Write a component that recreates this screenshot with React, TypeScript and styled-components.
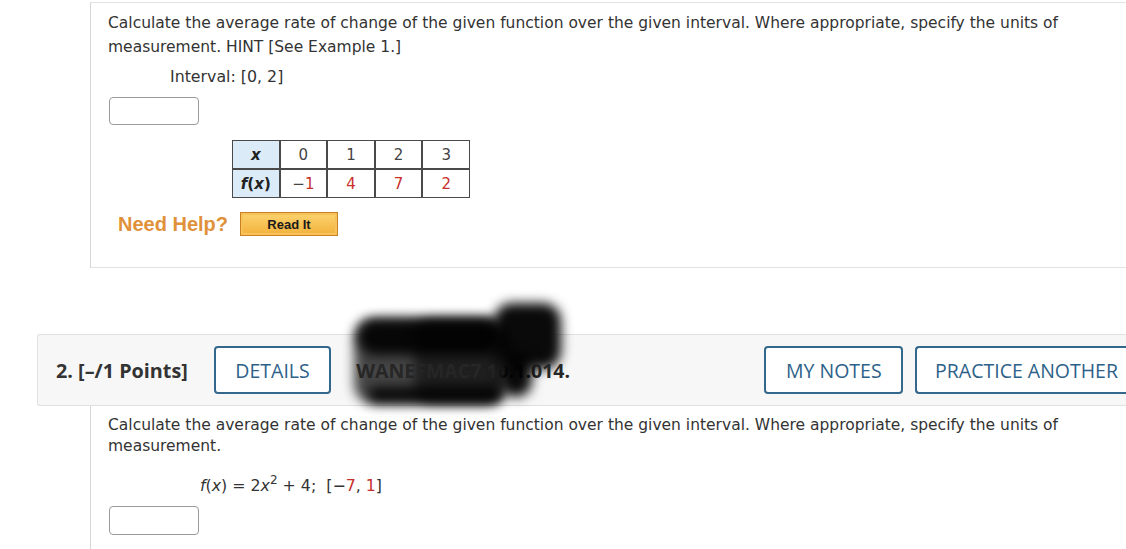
import React from 'react';
import styled, { createGlobalStyle } from 'styled-components';

const GlobalStyle = createGlobalStyle`
  body {
    margin: 0;
    background: #fff;
  }
`;

const App: React.FC = () => (
  <>
    <GlobalStyle />
    <Page>
      <QuestionBody $top>
        <Prompt>
          Calculate the average rate of change of the given function over the given interval. Where appropriate, specify the units of
          measurement. HINT [See Example 1.]
        </Prompt>
        <Formula $indent={62}>Interval: [0, 2]</Formula>
        <AnswerBox />
        <ValueTable>
          <tbody>
            <tr>
              <HeadCell>
                <i>x</i>
              </HeadCell>
              <Cell>0</Cell>
              <Cell>1</Cell>
              <Cell>2</Cell>
              <Cell>3</Cell>
            </tr>
            <tr>
              <HeadCell>
                <i>f</i>(<i>x</i>)
              </HeadCell>
              <Cell>
                −<Red>1</Red>
              </Cell>
              <Cell>
                <Red>4</Red>
              </Cell>
              <Cell>
                <Red>7</Red>
              </Cell>
              <Cell>
                <Red>2</Red>
              </Cell>
            </tr>
          </tbody>
        </ValueTable>
        <HelpRow>
          <HelpLabel>Need Help?</HelpLabel>
          <ReadIt>Read It</ReadIt>
        </HelpRow>
      </QuestionBody>

      <QuestionHeader>
        <Points>2. [–/1 Points]</Points>
        <OutlineButton>DETAILS</OutlineButton>
        <Code>
          {/* redaction smear drawn over the assignment code */}
          <Redaction $front={false}>
            <Smudge $left={0} $top={14} $width={152} $height={84} $alpha={0.72} />
            <Smudge $left={4} $top={14} $width={143} $height={36} $alpha={0.9} />
            <Smudge $left={14} $top={82} $width={134} $height={16} $alpha={0.9} />
            <Smudge $left={60} $top={14} $width={90} $height={84} $alpha={0.55} />
            <Smudge $left={140} $top={-2} $width={67} $height={66} $alpha={0.96} />
          </Redaction>
          <CodeText>WANEFMAC7 10.1.014.</CodeText>
          <Redaction $front>
            <Smudge $left={146} $top={48} $width={32} $height={44} $alpha={0.96} />
          </Redaction>
        </Code>
        <Spacer />
        <OutlineButton>MY NOTES</OutlineButton>
        <OutlineButton $open>PRACTICE ANOTHER</OutlineButton>
      </QuestionHeader>

      <QuestionBody>
        <Prompt $tight>
          Calculate the average rate of change of the given function over the given interval. Where appropriate, specify the units of
          measurement.
        </Prompt>
        <Formula $indent={92} $gap={18}>
          <i>f</i>(<i>x</i>) = 2<i>x</i>
          <sup>2</sup> + 4;&nbsp; [−<Red>7</Red>, <Red>1</Red>]
        </Formula>
        <AnswerBox $tall />
      </QuestionBody>
    </Page>
  </>
);

const Page = styled.div`
  width: 1126px;
  height: 549px;
  overflow: hidden;
  display: flex;
  flex-direction: column;
  font-family: 'DejaVu Sans', Verdana, sans-serif;
  color: #333;

  > * {
    flex-shrink: 0;
  }
`;

const QuestionBody = styled.section<{ $top?: boolean }>`
  margin-left: 90px;
  padding: ${(p) => (p.$top ? '8px 0 31px 17px' : '9px 0 20px 17px')};
  border-left: 1px solid #d6d6d6;
  ${(p) =>
    p.$top &&
    `
    margin-top: 2px;
    border-top: 1px solid #e2e2e2;
    border-bottom: 1px solid #e2e2e2;
  `}
`;

const Prompt = styled.p<{ $tight?: boolean }>`
  margin: 0;
  font-size: 15.5px;
  line-height: ${(p) => (p.$tight ? '21px' : '24px')};
  max-width: 1000px;
`;

const Formula = styled.div<{ $indent: number; $gap?: number }>`
  margin: ${(p) => p.$gap ?? 7}px 0 0 ${(p) => p.$indent}px;
  font-size: 15.8px;
  line-height: 22px;

  sup {
    font-size: 12px;
    line-height: 0;
    vertical-align: 7px;
  }
`;

const AnswerBox = styled.div<{ $tall?: boolean }>`
  width: 88px;
  height: ${(p) => (p.$tall ? 27 : 26)}px;
  margin: 9px 0 0 1px;
  border: 1px solid #9a9a9a;
  border-radius: 4px;
  background: #fff;
`;

const ValueTable = styled.table`
  margin: 15px 0 0 124px;
  border-collapse: separate;
  border-spacing: 0;
  font-size: 15px;
`;

const Cell = styled.td`
  width: 45.6px;
  height: 27px;
  padding: 0;
  border: 1px solid #4a4a4a;
  text-align: center;
  color: #444;
`;

const HeadCell = styled(Cell)`
  background: #dcebf8;
  font-weight: bold;
  color: #222;
`;

const Red = styled.span`
  color: #c8302c;
`;

const HelpRow = styled.div`
  display: flex;
  align-items: center;
  gap: 12px;
  margin: 14px 0 0 10px;
`;

const HelpLabel = styled.span`
  font-family: 'Liberation Sans', Arial, sans-serif;
  font-weight: bold;
  font-size: 20px;
  color: #e0913a;
`;

const ReadIt = styled.button`
  width: 98px;
  height: 24px;
  padding: 0;
  border: 1px solid #c9801f;
  box-shadow: inset 0 0 0 2px #f7c25c;
  background: linear-gradient(#fbd36f, #f3b23c);
  font-family: 'Liberation Sans', Arial, sans-serif;
  font-weight: bold;
  font-size: 13px;
  color: #1a1a1a;
`;

const QuestionHeader = styled.header`
  display: flex;
  align-items: center;
  gap: 26px;
  height: 70px;
  margin: 66px 0 0 37px;
  padding-left: 18px;
  background: #f7f7f7;
  border: 1px solid #e0e0e0;
  border-right: none;
  border-radius: 3px 0 0 3px;
  font-family: 'Open Sans', sans-serif;
`;

const Points = styled.span`
  font-weight: bold;
  font-size: 19.8px;
  color: #333;
`;

const OutlineButton = styled.button<{ $open?: boolean }>`
  height: 48px;
  padding: 0 19.5px;
  margin-left: ${(p) => (p.$open ? '-14px' : '0')};
  border: 2px solid #34678c;
  border-radius: 4px;
  ${(p) => p.$open && 'border-right: none; border-radius: 4px 0 0 4px; padding: 0 8px 0 18px;'}
  background: #fff;
  font-family: 'Open Sans', sans-serif;
  font-size: 19.5px;
  color: #2d6189;
  white-space: nowrap;
`;

const Code = styled.span`
  position: relative;
  margin-left: -1px;
  font-weight: bold;
  font-size: 19.5px;
  color: #262626;
`;

const CodeText = styled.span`
  position: relative;
  z-index: 1;
`;

const Redaction = styled.span<{ $front: boolean }>`
  position: absolute;
  z-index: ${(p) => (p.$front ? 2 : 0)};
  left: -2px;
  top: -52px;
  width: 210px;
  height: 100px;
  pointer-events: none;
`;

const Smudge = styled.span<{
  $left: number;
  $top: number;
  $width: number;
  $height: number;
  $alpha: number;
}>`
  position: absolute;
  left: ${(p) => p.$left}px;
  top: ${(p) => p.$top}px;
  width: ${(p) => p.$width}px;
  height: ${(p) => p.$height}px;
  border-radius: 18px;
  background: rgba(0, 0, 0, ${(p) => p.$alpha});
  filter: blur(6px);
`;

const Spacer = styled.span`
  flex: 1;
`;

export default App;
